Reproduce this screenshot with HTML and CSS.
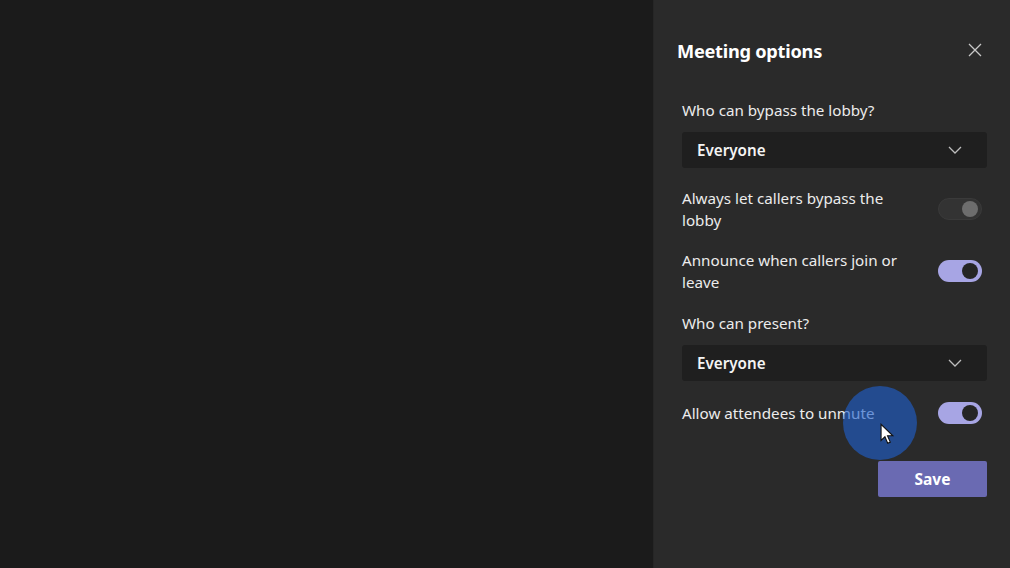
FILE: index.html
```html
<!DOCTYPE html>
<html>
<head>
<meta charset="utf-8">
<link rel="stylesheet" href="styles.css">
</head>
<body>
<div class="app">
  <div class="stage"></div>
  <aside class="panel">
    <header class="panel-head">
      <h1 class="title">Meeting options</h1>
      <button class="close" aria-label="Close">
        <svg width="14" height="14" viewBox="0 0 14 14"><path d="M1 1L13 13M13 1L1 13" stroke="#c8c8c8" stroke-width="1.3" fill="none"/></svg>
      </button>
    </header>
    <div class="form">
      <label class="label first">Who can bypass the lobby?</label>
      <div class="select">
        <span>Everyone</span>
        <svg width="14" height="8" viewBox="0 0 14 8"><path d="M1 1L7 7L13 1" stroke="#bdbdbd" stroke-width="1.3" fill="none"/></svg>
      </div>
      <div class="row r1">
        <span class="row-text">Always let callers bypass the lobby</span>
        <span class="toggle off"><span class="knob"></span></span>
      </div>
      <div class="row r2">
        <span class="row-text">Announce when callers join or leave</span>
        <span class="toggle on"><span class="knob"></span></span>
      </div>
      <label class="label second">Who can present?</label>
      <div class="select">
        <span>Everyone</span>
        <svg width="14" height="8" viewBox="0 0 14 8"><path d="M1 1L7 7L13 1" stroke="#bdbdbd" stroke-width="1.3" fill="none"/></svg>
      </div>
      <div class="row r3">
        <span class="row-text single">Allow attendees to unmute</span>
        <span class="toggle on"><span class="knob"></span></span>
      </div>
      <div class="actions">
        <button class="save">Save</button>
      </div>
    </div>
    <div class="click-ring"></div>
    <svg class="cursor" width="15" height="23" viewBox="0 0 14 21"><path d="M1 1L1 16L4.6 12.6L7.2 18.6L9.6 17.6L7 11.7L12 11.7Z" fill="#fff" stroke="#111" stroke-width="1"/></svg>
  </aside>
</div>
</body>
</html>
```
FILE: styles.css
```css
* { box-sizing: border-box; }
html, body { margin: 0; padding: 0; }
body {
  width: 1010px;
  height: 568px;
  overflow: hidden;
  background: #1b1b1b;
  font-family: "Noto Sans", "Open Sans", sans-serif;
  color: #f0f0f0;
}
.app { display: flex; height: 568px; }
.stage { width: 653px; background: #1b1b1b; }
.panel {
  position: relative;
  flex: 1;
  background: #2a2a2a;
  border-left: 1px solid #262626;
  padding: 37px 23px 0 23px;
}
.panel-head {
  display: flex;
  align-items: center;
  justify-content: space-between;
  height: 28px;
}
.title {
  margin: 0;
  font-size: 18.2px;
  font-weight: 700;
  line-height: 28px;
  color: #ffffff;
  letter-spacing: -0.25px;
}
.close {
  background: none;
  border: 0;
  padding: 0;
  width: 14px;
  height: 14px;
  margin-right: 5px;
  margin-top: -2px;
  display: flex;
}
.form {
  display: flex;
  flex-direction: column;
  padding-left: 5px;
}
.label {
  display: block;
  font-size: 15.2px;
  line-height: 22px;
  color: #ececec;
}
.label.first { margin-top: 34px; }
.label.second { margin-top: 19px; }
.select {
  margin-top: 11px;
  height: 36px;
  background: #1f1f1f;
  border-radius: 3px;
  display: flex;
  align-items: center;
  justify-content: space-between;
  padding: 0 25px 0 15px;
  font-size: 15.2px;
  font-weight: 600;
  color: #f4f4f4;
}
.row {
  display: flex;
  align-items: center;
  justify-content: space-between;
}
.r1 { margin-top: 19px; }
.r2 { margin-top: 18px; }
.r3 { margin-top: 21px; }
.row-text {
  width: 215px;
  font-size: 15.2px;
  line-height: 22px;
  color: #ececec;
}
.row-text.single { width: auto; }
.toggle {
  position: relative;
  width: 44px;
  height: 22px;
  border-radius: 11px;
  margin-right: 5px;
  flex: none;
}
.toggle.off { background: #333333; border: 1px solid #3a3a3a; }
.toggle.on { background: #a7a5e4; }
.knob {
  position: absolute;
  top: 3px;
  right: 4px;
  width: 16px;
  height: 16px;
  border-radius: 50%;
}
.toggle.off .knob { background: #6d6d6d; top: 2px; right: 3px; }
.toggle.on .knob { background: #252525; }
.actions {
  display: flex;
  justify-content: flex-end;
  margin-top: 37px;
}
.save {
  width: 109px;
  height: 36px;
  border: 0;
  border-radius: 2px;
  background: #6a6ab2;
  color: #ffffff;
  font-family: "Noto Sans", "Open Sans", sans-serif;
  font-size: 15.5px;
  font-weight: 700;
}
.click-ring {
  position: absolute;
  left: 189px;
  top: 386px;
  width: 74px;
  height: 74px;
  border-radius: 50%;
  background: rgba(30, 95, 205, 0.62);
}
.cursor {
  position: absolute;
  left: 226px;
  top: 423px;
}
```
